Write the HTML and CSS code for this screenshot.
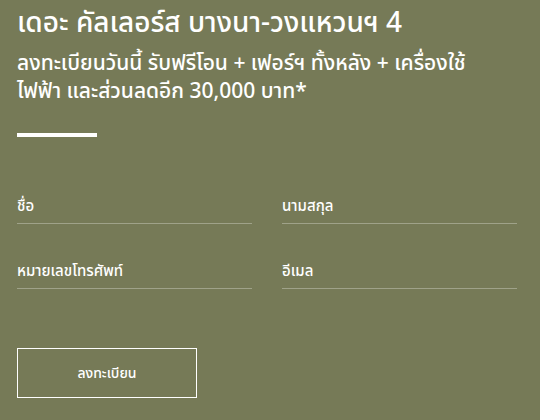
FILE: index.html
```html
<!DOCTYPE html>
<html lang="th">
<head>
    <meta charset="UTF-8">
    <title>เดอะ คัลเลอร์ส บางนา-วงแหวนฯ 4</title>
    <link rel="stylesheet" href="styles.css">
</head>
<body>
    <div class="register">
        <h1 class="register-title">เดอะ คัลเลอร์ส บางนา-วงแหวนฯ 4</h1>
        <p class="register-offer">ลงทะเบียนวันนี้ รับฟรีโอน + เฟอร์ฯ ทั้งหลัง + เครื่องใช้<br>ไฟฟ้า และส่วนลดอีก 30,000 บาท*</p>

        <div class="divider"></div>

        <!-- Register form -->
        <form class="register-form">
            <div class="field-grid">
                <input class="field" type="text" placeholder="ชื่อ">
                <input class="field" type="text" placeholder="นามสกุล">
                <input class="field" type="tel" placeholder="หมายเลขโทรศัพท์">
                <input class="field" type="email" placeholder="อีเมล">
            </div>
            <button class="submit-button" type="button">ลงทะเบียน</button>
        </form>
    </div>
</body>
</html>
```

FILE: styles.css
```css
/* Page */
html, body {
    margin: 0;
    background-color: #767a57;
}

body {
    font-family: "Noto Sans Thai", "Noto Sans Thai UI", "Noto Sans", "DejaVu Sans", sans-serif;
    color: #fff;
}

/* Container */
.register {
    width: 500px;
    padding: 8px 17px 0;
}

/* Heading */
.register-title {
    margin: 0;
    font-size: 28px;
    font-weight: 500;
    line-height: 32px;
}

.register-offer {
    margin: 10px 0 0;
    font-size: 21px;
    font-weight: 500;
    line-height: 28px;
}

/* Short white bar */
.divider {
    width: 80px;
    height: 4px;
    background-color: #fff;
    margin-top: 27px;
}

/* Fields */
.field-grid {
    display: grid;
    grid-template-columns: 1fr 1fr;
    column-gap: 30px;
    row-gap: 25px;
    margin-top: 47px;
}

.field {
    font-family: inherit;
    font-size: 15px;
    font-weight: 500;
    color: #fff;
    background: transparent;
    border: none;
    border-bottom: 1px solid rgba(255, 255, 255, 0.3);
    padding: 12px 0 6px;
    height: 40px;
    box-sizing: border-box;
    outline: none;
}

.field::placeholder {
    color: #fff;
    opacity: 1;
}

/* Submit button */
.submit-button {
    display: block;
    width: 180px;
    height: 50px;
    margin-top: 59px;
    background: transparent;
    border: 1px solid #fff;
    color: #fff;
    font-family: inherit;
    font-size: 14px;
    font-weight: 500;
    cursor: pointer;
}
```
